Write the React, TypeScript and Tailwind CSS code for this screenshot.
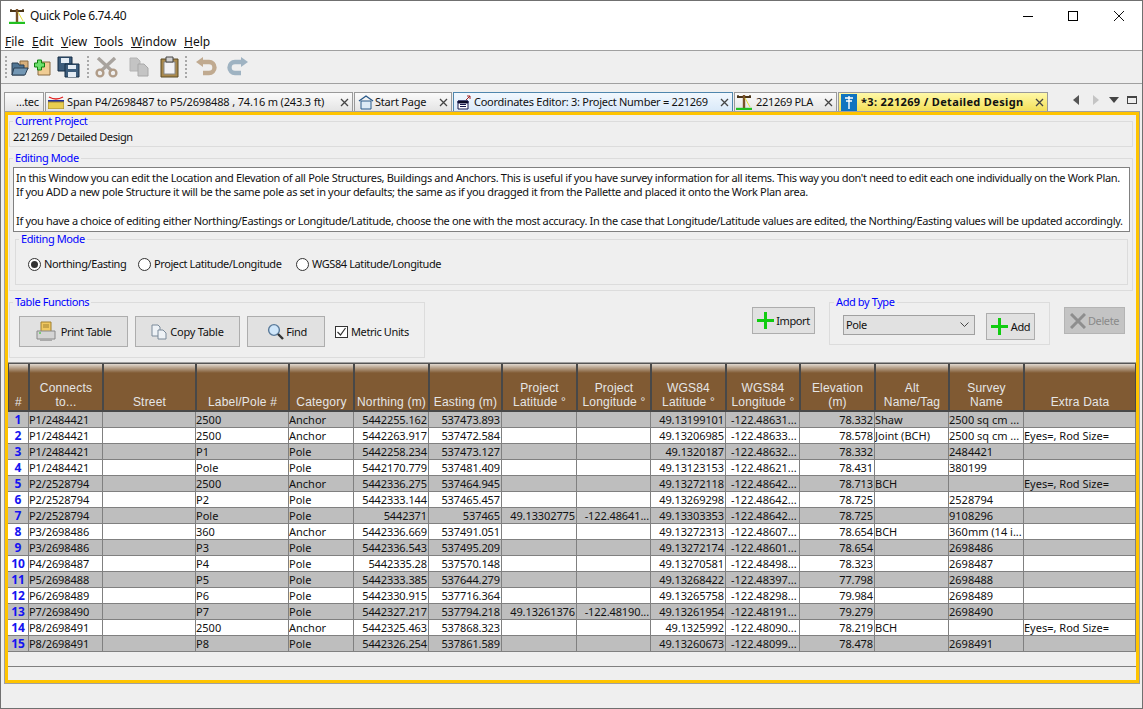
import React from "react";

const COLS = "grid grid-cols-[21px_74px_93px_93px_65px_75px_73px_75px_74px_75px_74px_75px_74px_75px_112px]";

type R = [string, string, string, string, string, string, string, string, string, string, string, string, string, string];
const ROWS: R[] = [
  ["P1/2484421", "", "2500", "Anchor", "5442255.162", "537473.893", "", "", "49.13199101", "-122.48631...", "78.332", "Shaw", "2500 sq cm ...", ""],
  ["P1/2484421", "", "2500", "Anchor", "5442263.917", "537472.584", "", "", "49.13206985", "-122.48633...", "78.578", "Joint (BCH)", "2500 sq cm ...", "Eyes=, Rod Size="],
  ["P1/2484421", "", "P1", "Pole", "5442258.234", "537473.127", "", "", "49.1320187", "-122.48632...", "78.332", "", "2484421", ""],
  ["P1/2484421", "", "Pole", "Pole", "5442170.779", "537481.409", "", "", "49.13123153", "-122.48621...", "78.431", "", "380199", ""],
  ["P2/2528794", "", "2500", "Anchor", "5442336.275", "537464.945", "", "", "49.13272118", "-122.48642...", "78.713", "BCH", "", "Eyes=, Rod Size="],
  ["P2/2528794", "", "P2", "Pole", "5442333.144", "537465.457", "", "", "49.13269298", "-122.48642...", "78.725", "", "2528794", ""],
  ["P2/2528794", "", "Pole", "Pole", "5442371", "537465", "49.13302775", "-122.48641...", "49.13303353", "-122.48642...", "78.725", "", "9108296", ""],
  ["P3/2698486", "", "360", "Anchor", "5442336.669", "537491.051", "", "", "49.13272313", "-122.48607...", "78.654", "BCH", "360mm (14 i...", ""],
  ["P3/2698486", "", "P3", "Pole", "5442336.543", "537495.209", "", "", "49.13272174", "-122.48601...", "78.654", "", "2698486", ""],
  ["P4/2698487", "", "P4", "Pole", "5442335.28", "537570.148", "", "", "49.13270581", "-122.48498...", "78.323", "", "2698487", ""],
  ["P5/2698488", "", "P5", "Pole", "5442333.385", "537644.279", "", "", "49.13268422", "-122.48397...", "77.798", "", "2698488", ""],
  ["P6/2698489", "", "P6", "Pole", "5442330.915", "537716.364", "", "", "49.13265758", "-122.48298...", "79.984", "", "2698489", ""],
  ["P7/2698490", "", "P7", "Pole", "5442327.217", "537794.218", "49.13261376", "-122.48190...", "49.13261954", "-122.48191...", "79.279", "", "2698490", ""],
  ["P8/2698491", "", "2500", "Anchor", "5442325.463", "537868.323", "", "", "49.1325992", "-122.48090...", "78.219", "BCH", "", "Eyes=, Rod Size="],
  ["P8/2698491", "", "P8", "Pole", "5442326.254", "537861.589", "", "", "49.13260673", "-122.48099...", "78.478", "", "2698491", ""],
];
const RIGHT = new Set([4, 5, 6, 7, 8, 10]);
const DIGITS = new Set([0, 4, 5, 6, 7, 8, 10]);

const HEADS: string[][] = [
  ["#"], ["Connects", "to..."], ["Street"], ["Label/Pole #"], ["Category"], ["Northing (m)"], ["Easting (m)"],
  ["Project", "Latitude °"], ["Project", "Longitude °"], ["WGS84", "Latitude °"], ["WGS84", "Longitude °"],
  ["Elevation", "(m)"], ["Alt", "Name/Tag"], ["Survey", "Name"], ["Extra Data"],
];

function Close() {
  return (
    <svg width="9" height="9" viewBox="0 0 9 9" className="shrink-0">
      <path d="M1 1l7 7M8 1l-7 7" stroke="#444" strokeWidth="1.3" />
    </svg>
  );
}

function PoleIcon({ size = 16 }: { size?: number }) {
  return (
    <svg width={size} height={size} viewBox="0 0 16 16" className="shrink-0">
      <path d="M1 3h14" stroke="#4a3418" strokeWidth="2" />
      <path d="M2 1v2M14 1v2" stroke="#4a3418" strokeWidth="1.4" />
      <path d="M8 1v13" stroke="#7a5229" strokeWidth="2.4" />
      <path d="M9 4l5 9" stroke="#e8e040" strokeWidth="1" />
      <path d="M0 15h16" stroke="#22c020" strokeWidth="2.4" />
    </svg>
  );
}

function Plus({ size = 17 }: { size?: number }) {
  return (
    <svg width={size} height={size} viewBox="0 0 17 17" className="shrink-0">
      <path d="M0 8.5h17M8.5 0v17" stroke="#10cc10" strokeWidth="3" />
    </svg>
  );
}

function Grip() {
  return <div className="mx-[4px] h-[22px] w-[2px] border-l-2 border-dotted border-[#a8a8a8]" />;
}

function Box({
  label,
  className,
  legendClass = "ml-[3px]",
  children,
}: {
  label: string;
  className: string;
  legendClass?: string;
  children?: React.ReactNode;
}) {
  return (
    <fieldset className={"border border-[#dcdcdc] " + className}>
      <legend className={"px-[2px] text-[11px] leading-[12px] text-[#0000ff] " + legendClass}>{label}</legend>
      {children}
    </fieldset>
  );
}

function Btn({ className, children }: { className: string; children: React.ReactNode }) {
  return (
    <div className={"flex items-center justify-center border border-[#adadad] bg-[#e1e1e1] text-[11px] text-[#111] " + className}>
      {children}
    </div>
  );
}

function Radio({ checked, label, className }: { checked?: boolean; label: string; className: string }) {
  return (
    <div className={"flex items-center gap-[3px] " + className}>
      <div className="flex h-[13px] w-[13px] items-center justify-center rounded-full border border-[#333] bg-white">
        {checked && <div className="h-[7px] w-[7px] rounded-full bg-[#333]" />}
      </div>
      <span>{label}</span>
    </div>
  );
}

function Tab({ className, children }: { className: string; children: React.ReactNode }) {
  return <div className={"flex h-[19px] items-center overflow-hidden border border-b-0 whitespace-nowrap " + className}>{children}</div>;
}

const idle = "border-[#9a9a9a] bg-[linear-gradient(#fbfbfb,#e4e4e4)]";

export default function App() {
  return (
    <div className="flex h-[709px] w-[1143px] flex-col overflow-hidden border border-[#707070] bg-[#efefef] font-['Noto_Sans',sans-serif] text-[11px] leading-[14px] tracking-[-0.4px] text-[#111]">
      {/* Title + menu */}
      <div className="h-[50px] shrink-0 border-b border-[#a0a0a0] bg-white">
        <div className="flex h-[30px] items-center pl-[8px]">
          <PoleIcon />
          <span className="ml-[5px] text-[12px]">Quick Pole 6.74.40</span>
          <div className="ml-auto flex items-center">
            <div className="h-px w-[10px] bg-black" />
            <div className="ml-[35px] h-[10px] w-[10px] border border-black" />
            <svg width="10" height="10" viewBox="0 0 10 10" className="mr-[18px] ml-[36px]">
              <path d="M0 0l10 10M10 0L0 10" stroke="#111" strokeWidth="1" />
            </svg>
          </div>
        </div>
        <div className="flex h-[19px] items-center pt-[2px] pl-[4px] text-[12px] tracking-normal">
          {[["F", "ile", "w-[27px]"], ["E", "dit", "w-[29px]"], ["V", "iew", "w-[33px]"], ["T", "ools", "w-[37px]"], ["W", "indow", "w-[53px]"], ["H", "elp", "w-[30px]"]].map(([a, b, w]) => (
            <span key={a} className={w}>
              <span className="underline">{a}</span>
              {b}
            </span>
          ))}
        </div>
      </div>

      {/* Toolbar */}
      <div className="flex h-[33px] shrink-0 items-center border-b border-[#a0a0a0]">
        <Grip />
        <svg width="18" height="18" viewBox="0 0 18 18" className="mt-[2px]">
          <path d="M9 2h8v8H9z" fill="#d8b07c" stroke="#8a6a40" />
          <path d="M1 4h6l1 2h5v10H1z" fill="#4f7594" stroke="#2b3f52" />
          <path d="M3 9h14l-3 7H1z" fill="#7397b4" stroke="#2b3f52" />
        </svg>
        <svg width="17" height="18" viewBox="0 0 17 18" className="mt-[2px] ml-[5px]">
          <path d="M4 3h12v13H4z" fill="#f0cc94" stroke="#8a6a40" />
          <path d="M0 4h3V1h4v3h3v4H7v3H3V8H0z" fill="#6ce06c" stroke="#108010" transform="translate(0.5 0)" />
        </svg>
        <svg width="23" height="22" viewBox="0 0 23 22" className="ml-[6px]">
          <path d="M1 1h14v14H1z" fill="#3d5d7c" stroke="#142c44" />
          <path d="M4 2h8v5H4z" fill="#e4ecf4" />
          <path d="M8 8h14v13H8z" fill="#3d5d7c" stroke="#142c44" />
          <path d="M11 9h8v4h-8zM11 16h8v5h-8z" fill="#e4ecf4" />
        </svg>
        <div className="w-[3px]" />
        <Grip />
        <svg width="23" height="21" viewBox="0 0 23 21" className="ml-[2px]">
          <path d="M3 1l14 13M20 1L6 14" stroke="#a8a39e" strokeWidth="3.4" />
          <circle cx="5" cy="16" r="3.4" fill="none" stroke="#b09c88" strokeWidth="2.4" />
          <circle cx="18" cy="16" r="3.4" fill="none" stroke="#b09c88" strokeWidth="2.4" />
        </svg>
        <svg width="20" height="20" viewBox="0 0 20 20" className="ml-[11px]">
          <path d="M1 1h7l3 3v10H1z" fill="#c4c4c4" stroke="#b4b4b4" />
          <path d="M9 7h6l4 4v8H9z" fill="#c4c4c4" stroke="#a8a8a8" />
        </svg>
        <svg width="19" height="22" viewBox="0 0 19 22" className="ml-[11px]">
          <path d="M1 3h17v18H1z" fill="#a8884c" stroke="#5a4a24" />
          <path d="M4 6h11v12H4z" fill="#f2f2f4" stroke="#8a8a8a" />
          <path d="M6 1h7v5H6z" fill="#d0d0d0" stroke="#444" />
        </svg>
        <div className="w-[2px]" />
        <Grip />
        <svg width="22" height="20" viewBox="0 0 22 20" className="ml-[4px]">
          <path d="M6 5h8a5 5 0 0 1 0 11H8" fill="none" stroke="#c0aa90" strokeWidth="4.4" />
          <path d="M1 5l7-5v10z" fill="#c0aa90" />
        </svg>
        <svg width="22" height="20" viewBox="0 0 22 20" className="ml-[10px]">
          <path d="M16 5H8a5 5 0 0 0 0 11h6" fill="none" stroke="#9fb3c2" strokeWidth="4.4" />
          <path d="M21 5l-7-5v10z" fill="#9fb3c2" />
        </svg>
      </div>

      {/* Tab strip */}
      <div className="flex h-[27px] shrink-0 items-end pl-[3px]">
        <Tab className={"w-[40px] pl-[11px] " + idle}>…tec</Tab>
        <Tab className={"ml-px w-[308px] tracking-[-0.16px] " + idle}>
          <svg width="16" height="14" viewBox="0 0 16 14" className="mr-[3px] ml-[2px]">
            <path d="M1 2q7 4 14 0" fill="none" stroke="#e02020" strokeWidth="1.4" />
            <path d="M0 5h16v2H0z" fill="#2030a0" />
            <path d="M0 7h16v7H0z" fill="#e8cc50" stroke="#a08830" />
          </svg>
          <span>Span P4/2698487 to P5/2698488 , 74.16 m (243.3 ft)</span>
          <div className="ml-auto pr-[3px]"><Close /></div>
        </Tab>
        <Tab className={"ml-px w-[98px] tracking-[-0.2px] " + idle}>
          <svg width="16" height="15" viewBox="0 0 16 15" className="mr-[1px] ml-[3px]">
            <path d="M1 6l7-5 7 5" fill="none" stroke="#2a5a8a" strokeWidth="1.4" />
            <path d="M3 6h10v8H3z" fill="#dceaf6" stroke="#2a5a8a" />
          </svg>
          <span>Start Page</span>
          <div className="ml-auto pr-[3px]"><Close /></div>
        </Tab>
        <Tab className="ml-px w-[280px] border-[#4f86ad] bg-[linear-gradient(#f2f8fe,#d9e9f9)] tracking-[-0.26px]">
          <svg width="15" height="15" viewBox="0 0 15 15" className="mr-[2px] ml-[3px]">
            <path d="M1 6h10v8H1z" fill="#fff" stroke="#16164c" />
            <path d="M1 6h10v2H1zM3 9.5h6M3 11.5h6" stroke="#16164c" />
            <path d="M9 5l4-4M10 1h3v3" fill="none" stroke="#a02020" />
          </svg>
          <span>Coordinates Editor: 3: Project Number = 221269</span>
          <div className="ml-auto pr-[3px]"><Close /></div>
        </Tab>
        <Tab className={"ml-px w-[103px] tracking-[-0.3px] " + idle}>
          <div className="mr-[4px] ml-[1px]"><PoleIcon /></div>
          <span>221269 PLA</span>
          <div className="ml-auto pr-[3px]"><Close /></div>
        </Tab>
        <Tab className="ml-px w-[210px] border-[#9a9a9a] bg-[linear-gradient(#fff9a8,#f3df58)] tracking-[0.35px]">
          <svg width="16" height="17" viewBox="0 0 16 17" className="mr-[4px] ml-[2px] shrink-0">
            <path d="M0 0h16v17H0z" fill="#0f74c0" />
            <path d="M8 2v13M4 4h8M5 7h6" stroke="#fff" strokeWidth="1.4" />
          </svg>
          <span className="font-bold">*3: 221269 / Detailed Design</span>
          <div className="ml-auto pr-[3px]"><Close /></div>
        </Tab>
        <div className="mb-[6px] ml-[25px] flex items-center">
          <svg width="6" height="10" viewBox="0 0 6 10"><path d="M6 0v10L0 5z" fill="#555" /></svg>
          <svg width="6" height="10" viewBox="0 0 6 10" className="ml-[14px]"><path d="M0 0v10l6-5z" fill="#c4c4c4" /></svg>
          <svg width="10" height="6" viewBox="0 0 10 6" className="ml-[10px]"><path d="M0 0h10L5 6z" fill="#444" /></svg>
          <div className="ml-[8px] h-[8px] w-[10px] border border-t-2 border-[#444]" />
        </div>
      </div>

      {/* Gold panel */}
      <div className="ml-[3px] h-[573px] w-[1136px] shrink-0 border border-[#a0a0a0]">
        <div className="flex h-full flex-col border-[3px] border-[#ffc400]">
          <Box label="Current Project" className="ml-px h-[32px] w-[1124px] pl-[3px]" legendClass="ml-0">
            <div className="pt-[3px] leading-[14px]">221269 / Detailed Design</div>
          </Box>

          <Box label="Editing Mode" className="mt-[5px] ml-px h-[139px] w-[1124px] pl-[3px]" legendClass="ml-0">
            <div className="mt-[3px] h-[65px] w-[1117px] overflow-hidden border border-[#808080] bg-white pt-[3px] pl-[2px] text-[11px] leading-[14.3px] tracking-[-0.33px] whitespace-nowrap">
              <div>In this Window you can edit the Location and Elevation of all Pole Structures, Buildings and Anchors. This is useful if you have survey information for all items. This way you don't need to edit each one individually on the Work Plan.</div>
              <div>If you ADD a new pole Structure it will be the same pole as set in your defaults; the same as if you dragged it from the Pallette and placed it onto the Work Plan area.</div>
              <div>&nbsp;</div>
              <div>If you have a choice of editing either Northing/Eastings or Longitude/Latitude, choose the one with the most accuracy. In the case that Longitude/Latitude values are edited, the Northing/Easting values will be updated accordingly.</div>
            </div>
            <Box label="Editing Mode" className="mt-[1px] ml-[2px] h-[52px] w-[1113px]" legendClass="ml-[3px]">
              <div className="flex pt-[12px]">
                <Radio checked label="Northing/Easting" className="ml-[12px] w-[110px]" />
                <Radio label="Project Latitude/Longitude" className="w-[158px]" />
                <Radio label="WGS84 Latitude/Longitude" className="" />
              </div>
            </Box>
          </Box>

          <div className="mt-[5px] flex h-[62px] items-start">
            <Box label="Table Functions" className="ml-px h-[62px] w-[416px] shrink-0">
              <div className="mt-[8px] flex items-center pl-[9px]">
                <Btn className="h-[31px] w-[109px] gap-[4px]">
                  <svg width="20" height="21" viewBox="0 0 20 21">
                    <path d="M5 1h10v10H5z" fill="#f0c860" stroke="#a08030" />
                    <path d="M7 4h6M7 6h6" stroke="#a08030" />
                    <path d="M1 10h18v8H1z" fill="#d4d4d4" stroke="#888" />
                    <path d="M4 18h12v2H4z" fill="#aaa" />
                    <path d="M3 12h2" stroke="#20c020" />
                  </svg>
                  <span className="ml-[1px]">Print Table</span>
                </Btn>
                <Btn className="ml-[7px] h-[31px] w-[105px] gap-[3px] tracking-[-0.25px]">
                  <svg width="16" height="16" viewBox="0 0 16 16">
                    <path d="M1 1h6l2 2v9H1z" fill="#eef2f6" stroke="#7a8a9a" />
                    <path d="M7 6h5l3 3v6H7z" fill="#eef2f6" stroke="#7a8a9a" />
                  </svg>
                  <span>Copy Table</span>
                </Btn>
                <Btn className="ml-[7px] h-[31px] w-[78px] gap-[2px]">
                  <svg width="17" height="17" viewBox="0 0 17 17" className="ml-[2px]">
                    <circle cx="7" cy="7" r="5.4" fill="#cfe6fa" stroke="#5a7a9a" strokeWidth="1.4" />
                    <path d="M11 11l5 5" stroke="#333" strokeWidth="2.4" />
                  </svg>
                  <span>Find</span>
                </Btn>
                <div className="ml-[10px] flex h-[12px] w-[13px] items-center justify-center border border-[#333] bg-white">
                  <svg width="11" height="10" viewBox="0 0 11 10"><path d="M1.5 5l3 3 5-7" fill="none" stroke="#333" strokeWidth="1.2" /></svg>
                </div>
                <span className="ml-[3px]">Metric Units</span>
              </div>
            </Box>
            <Btn className="mt-[11px] ml-[327px] h-[27px] w-[63px] gap-[2px]">
              <Plus />
              <span>Import</span>
            </Btn>
            <Box label="Add by Type" className="ml-[14px] h-[49px] w-[221px] shrink-0" legendClass="ml-[4px]">
              <div className="flex items-start pl-[13px]">
                <div className="mt-[7px] flex h-[20px] w-[132px] items-center border border-[#a0a0a0] bg-[#e1e1e1] pr-[5px] pl-[2px]">
                  <span>Pole</span>
                  <svg width="9" height="6" viewBox="0 0 9 6" className="ml-auto"><path d="M0.5 0.5l4 4 4-4" fill="none" stroke="#444" /></svg>
                </div>
                <Btn className="mt-[5px] ml-[11px] h-[27px] w-[49px] gap-[3px]">
                  <Plus />
                  <span>Add</span>
                </Btn>
              </div>
            </Box>
            <div className="mt-[11px] ml-[14px] flex h-[27px] w-[61px] items-center justify-center gap-[2px] border border-[#b4b4b4] bg-[#c4c4c4] text-[#8a8a8a]">
              <svg width="16" height="16" viewBox="0 0 16 16"><path d="M1 1l14 14M15 1L1 15" stroke="#8e8e8e" strokeWidth="3" /></svg>
              <span>Delete</span>
            </div>
          </div>

          {/* Table */}
          <div className="mt-[4px] border-t border-[#a0a0a0]">
            <div className={COLS + " h-[49px] border-t border-[#555]"}>
              {HEADS.map((h, i) => (
                <div
                  key={i}
                  className="flex flex-col items-center justify-end overflow-hidden border-x border-b-2 border-x-[#484848] border-b-[#484848] bg-[linear-gradient(#e0d8cf,#805a33_9px)] pb-[1px] font-['Liberation_Sans',sans-serif] text-[12px] leading-[14px] tracking-[0.2px] whitespace-nowrap text-[#e6e6e6]"
                >
                  {h.map((t) => (
                    <span key={t}>{t}</span>
                  ))}
                </div>
              ))}
            </div>
            {ROWS.map((r, i) => (
              <div key={i} className={COLS + " h-[16px] border-b border-[#808080] tracking-normal " + (i % 2 === 0 ? "bg-[#bebebe]" : "bg-white")}>
                <div className="border-r border-[#808080] text-center text-[12px] leading-[15px] font-bold text-[#1414f0]">{i + 1}</div>
                {r.map((c, j) => (
                  <div
                    key={j}
                    className={
                      "overflow-hidden border-r border-[#808080] leading-[15px] whitespace-nowrap " +
                      (RIGHT.has(j) ? "pr-px text-right " : "text-left ") +
                      (DIGITS.has(j) ? "tracking-[-0.1px] " : "") +
                      (j === 9 ? "pl-[5px]" : "")
                    }
                  >
                    {c}
                  </div>
                ))}
              </div>
            ))}
          </div>
          <div className="h-[15px] shrink-0 border-b border-[#808080]" />
        </div>
      </div>
    </div>
  );
}
